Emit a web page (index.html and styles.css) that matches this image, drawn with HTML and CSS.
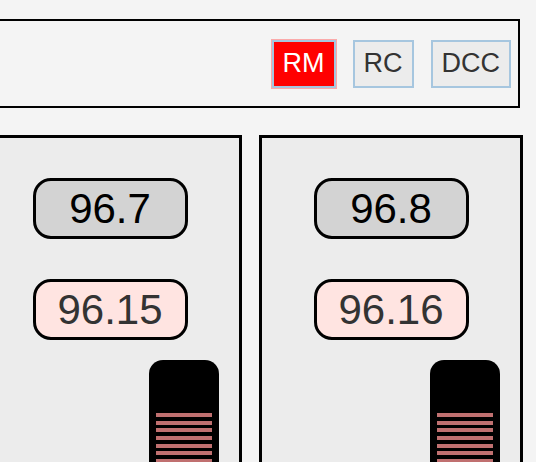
FILE: index.html
```html
<!DOCTYPE html>
<html>
<head>
<meta charset="utf-8">
<link rel="stylesheet" href="styles.css">
</head>
<body>
<div class="topbar">
  <button class="mode active">RM</button>
  <button class="mode">RC</button>
  <button class="mode">DCC</button>
</div>
<div class="panels">
  <div class="panel">
    <div class="pill pill-set">96.7</div>
    <div class="pill pill-act">96.15</div>
    <div class="slider">
      <div class="stripes">
        <span></span><span></span><span></span><span></span><span></span><span></span><span></span>
      </div>
    </div>
  </div>
  <div class="panel">
    <div class="pill pill-set">96.8</div>
    <div class="pill pill-act">96.16</div>
    <div class="slider">
      <div class="stripes">
        <span></span><span></span><span></span><span></span><span></span><span></span><span></span>
      </div>
    </div>
  </div>
</div>
</body>
</html>
```
FILE: styles.css
```css
html, body {
  margin: 0;
  padding: 0;
  background: #f4f4f4;
  overflow: hidden;
  font-family: "Liberation Sans", Arial, sans-serif;
}
body {
  width: 536px;
  height: 462px;
}
.topbar {
  box-sizing: border-box;
  margin-top: 19px;
  margin-left: -30px;
  width: 550px;
  height: 89px;
  border: 2px solid #000;
  background: #f4f4f4;
  display: flex;
  justify-content: flex-end;
  align-items: center;
  gap: 17px;
  padding-right: 7px;
}
.mode {
  box-sizing: border-box;
  flex: none;
  height: 48px;
  padding: 0 9px;
  margin: 0;
  border: 2px solid #a6c6df;
  background: #ececec;
  color: #333;
  font-family: "Liberation Sans", Arial, sans-serif;
  font-size: 27px;
  line-height: 1;
}
.mode.active {
  background: #ff0000;
  color: #fff;
  box-shadow: 0 0 0 1px rgba(255, 120, 120, 0.6);
}
.panels {
  margin-top: 27px;
  margin-left: -22px;
  display: flex;
  gap: 17px;
}
.panel {
  box-sizing: border-box;
  width: 264px;
  height: 400px;
  flex: none;
  border: 3px solid #000;
  background: #ececec;
  padding-top: 40px;
  display: flex;
  flex-direction: column;
  align-items: center;
}
.pill {
  box-sizing: border-box;
  flex: none;
  width: 155px;
  height: 61px;
  border: 3px solid #000;
  border-radius: 18px;
  display: flex;
  align-items: center;
  justify-content: center;
  font-size: 42px;
  line-height: 1;
}
.pill-set {
  background: #d3d3d3;
  color: #000;
}
.pill-act {
  margin-top: 40px;
  background: #ffe4e1;
  color: #333;
}
.slider {
  flex: none;
  align-self: flex-end;
  margin-right: 20px;
  margin-top: 20px;
  width: 70px;
  height: 200px;
  background: #000;
  border-radius: 14px;
  box-sizing: border-box;
  padding: 53px 7px 0;
}
.stripes {
  display: flex;
  flex-direction: column;
  gap: 3.7px;
}
.stripes span {
  display: block;
  height: 4px;
  background: #c07070;
  filter: blur(0.7px);
}
```
